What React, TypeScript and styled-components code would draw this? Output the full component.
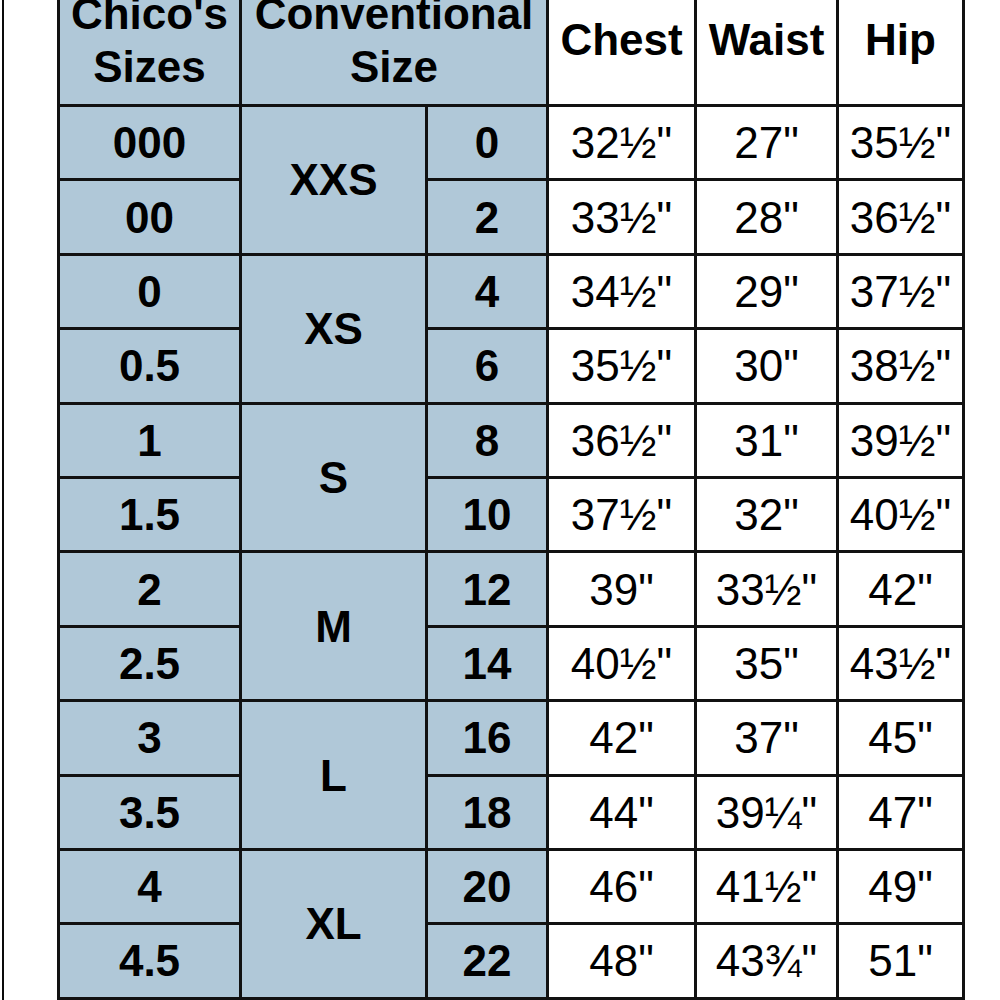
import React from "react";
import styled, { createGlobalStyle } from "styled-components";

const Global = createGlobalStyle`
  html, body { margin: 0; padding: 0; background: #ffffff; }
  body { font-family: "Liberation Sans", Arial, sans-serif; }
`;

const Page = styled.div`
  display: flex;
  align-items: flex-start;
  width: 1000px;
  height: 1000px;
  overflow: hidden;
  background: #ffffff;
`;

const LeftRule = styled.div`
  flex: none;
  width: 2px;
  height: 1000px;
  margin-left: 2px;
  background: #0a0a0a;
`;

const Chart = styled.div`
  flex: none;
  margin-left: 53px;
  margin-top: -28px;
  display: grid;
  grid-template-columns: 179px 183px 118px 145px 139px 123px;
  grid-template-rows: 129px repeat(12, 71.4px);
  gap: 3px;
  padding: 3px;
  background: #111111;
`;

const Cell = styled.div<{ $blue?: boolean; $bold?: boolean; $span?: number; $cols?: number }>`
  display: flex;
  align-items: center;
  justify-content: center;
  text-align: center;
  background: ${(p) => (p.$blue ? "#b0c8d8" : "#ffffff")};
  color: #000000;
  font-family: "Liberation Sans", Arial, sans-serif;
  font-size: 44px;
  line-height: 53px;
  font-weight: ${(p) => (p.$bold ? 700 : 400)};
  grid-row: ${(p) => (p.$span ? `span ${p.$span}` : "auto")};
  grid-column: ${(p) => (p.$cols ? `span ${p.$cols}` : "auto")};
  white-space: nowrap;
`;

const HeadText = styled.span`
  display: block;
`;

type Group = {
  letter: string;
  rows: { chico: string; num: string; chest: string; waist: string; hip: string }[];
};

const groups: Group[] = [
  {
    letter: "XXS",
    rows: [
      { chico: "000", num: "0", chest: "32½\"", waist: "27\"", hip: "35½\"" },
      { chico: "00", num: "2", chest: "33½\"", waist: "28\"", hip: "36½\"" },
    ],
  },
  {
    letter: "XS",
    rows: [
      { chico: "0", num: "4", chest: "34½\"", waist: "29\"", hip: "37½\"" },
      { chico: "0.5", num: "6", chest: "35½\"", waist: "30\"", hip: "38½\"" },
    ],
  },
  {
    letter: "S",
    rows: [
      { chico: "1", num: "8", chest: "36½\"", waist: "31\"", hip: "39½\"" },
      { chico: "1.5", num: "10", chest: "37½\"", waist: "32\"", hip: "40½\"" },
    ],
  },
  {
    letter: "M",
    rows: [
      { chico: "2", num: "12", chest: "39\"", waist: "33½\"", hip: "42\"" },
      { chico: "2.5", num: "14", chest: "40½\"", waist: "35\"", hip: "43½\"" },
    ],
  },
  {
    letter: "L",
    rows: [
      { chico: "3", num: "16", chest: "42\"", waist: "37\"", hip: "45\"" },
      { chico: "3.5", num: "18", chest: "44\"", waist: "39¼\"", hip: "47\"" },
    ],
  },
  {
    letter: "XL",
    rows: [
      { chico: "4", num: "20", chest: "46\"", waist: "41½\"", hip: "49\"" },
      { chico: "4.5", num: "22", chest: "48\"", waist: "43¾\"", hip: "51\"" },
    ],
  },
];

export default function App() {
  return (
    <>
      <Global />
      <Page>
        <LeftRule />
        <Chart>
          <Cell $blue $bold>
            <div>
              <HeadText>Chico's</HeadText>
              <HeadText>Sizes</HeadText>
            </div>
          </Cell>
          <Cell $blue $bold $cols={2}>
            <div>
              <HeadText>Conventional</HeadText>
              <HeadText>Size</HeadText>
            </div>
          </Cell>
          <Cell $bold>Chest</Cell>
          <Cell $bold>Waist</Cell>
          <Cell $bold>Hip</Cell>
          {groups.map((g) => (
            <React.Fragment key={g.letter}>
              {g.rows.map((r, i) => (
                <React.Fragment key={r.chico}>
                  <Cell $blue $bold>{r.chico}</Cell>
                  {i === 0 && (
                    <Cell $blue $bold $span={2}>
                      {g.letter}
                    </Cell>
                  )}
                  <Cell $blue $bold>{r.num}</Cell>
                  <Cell>{r.chest}</Cell>
                  <Cell>{r.waist}</Cell>
                  <Cell>{r.hip}</Cell>
                </React.Fragment>
              ))}
            </React.Fragment>
          ))}
        </Chart>
      </Page>
    </>
  );
}
